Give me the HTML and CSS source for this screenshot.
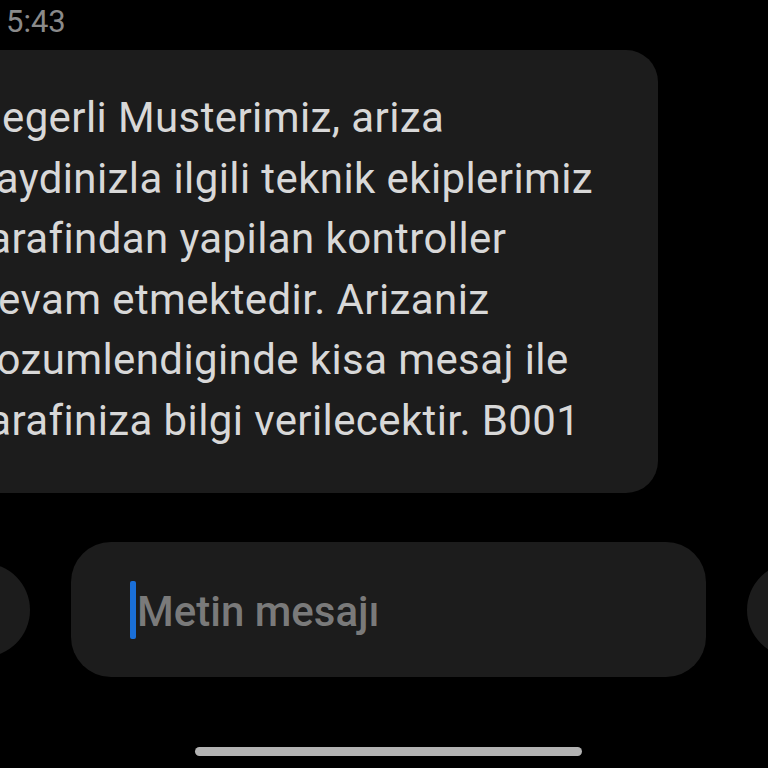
FILE: index.html
```html
<!DOCTYPE html>
<html lang="tr">
<head>
<meta charset="utf-8">
<link rel="stylesheet" href="styles.css">
</head>
<body>
<div class="screen">
  <div class="time">5:43</div>
  <div class="bubble">
    <p class="msg">Degerli Musterimiz, ariza<br>kaydinizla ilgili teknik ekiplerimiz<br>tarafindan yapilan kontroller<br>devam etmektedir. Arizaniz<br>cozumlendiginde kisa mesaj ile<br>tarafiniza bilgi verilecektir. B001</p>
  </div>
  <div class="composer">
    <div class="circle"></div>
    <div class="input"><span class="caret"></span><span class="placeholder">Metin mesajı</span></div>
    <div class="circle"></div>
  </div>
  <div class="homebar-row"><div class="homebar"></div></div>
</div>
</body>
</html>
```
FILE: styles.css
```css
html, body {
  margin: 0;
  padding: 0;
  background: #000;
}
.screen {
  width: 768px;
  height: 768px;
  overflow: hidden;
  background: #000;
  font-family: Roboto, "Noto Sans", sans-serif;
  display: flex;
  flex-direction: column;
}
.time {
  height: 50px;
  box-sizing: border-box;
  padding: 3px 0 0 6px;
  font-size: 31px;
  line-height: 38px;
  color: #8a8a8a;
}
.bubble {
  margin-left: -80px;
  width: 738px;
  height: 443px;
  box-sizing: border-box;
  background: #1c1c1c;
  border-radius: 32px;
  padding: 38px 0 0 54px;
}
.msg {
  margin: 0;
  font-size: 42px;
  letter-spacing: 0.4px;
  line-height: 60.5px;
  color: #d8d8d8;
  white-space: nowrap;
}
.composer {
  margin-top: 49px;
  display: flex;
  align-items: center;
  gap: 41px;
  margin-left: -64px;
}
.circle {
  flex: none;
  width: 94px;
  height: 94px;
  border-radius: 50%;
  background: #1c1c1c;
}
.input {
  flex: none;
  width: 635px;
  height: 135px;
  box-sizing: border-box;
  border-radius: 40px;
  background: #1c1c1c;
  display: flex;
  align-items: center;
  padding-left: 59px;
}
.caret {
  width: 6px;
  height: 58px;
  border-radius: 2px;
  background: #1a6fd8;
  margin-right: 1px;
}
.placeholder {
  font-size: 42px;
  font-weight: 500;
  color: #7a7a7a;
  line-height: 58px;
  padding-top: 4px;
}
.homebar-row {
  margin-top: 70px;
  padding-left: 195px;
}
.homebar {
  width: 387px;
  height: 9px;
  border-radius: 5px;
  background: #b3b3b3;
}
```
